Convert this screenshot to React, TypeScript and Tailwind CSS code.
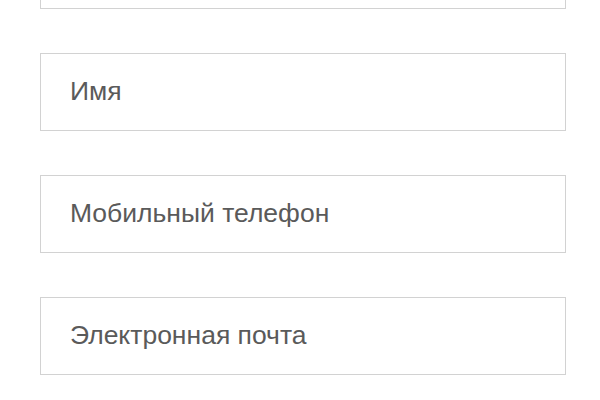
import React from 'react'

const fields = ['', 'Имя', 'Мобильный телефон', 'Электронная почта']

const App = () => {
    return (
        <div className="w-[600px] h-[400px] overflow-hidden bg-white font-['Liberation_Sans',Arial,sans-serif]">
            <div className="flex flex-col gap-[44px] pl-[40px] -mt-[69px]">
                {fields.map((label, i) => (
                    <div
                        key={i}
                        className="w-[526px] h-[78px] border border-[#d2d2d2] flex items-center pl-[29px] text-[26.5px] text-[#5a5a5a]"
                    >
                        {label}
                    </div>
                ))}
            </div>
        </div>
    )
}

export default App
